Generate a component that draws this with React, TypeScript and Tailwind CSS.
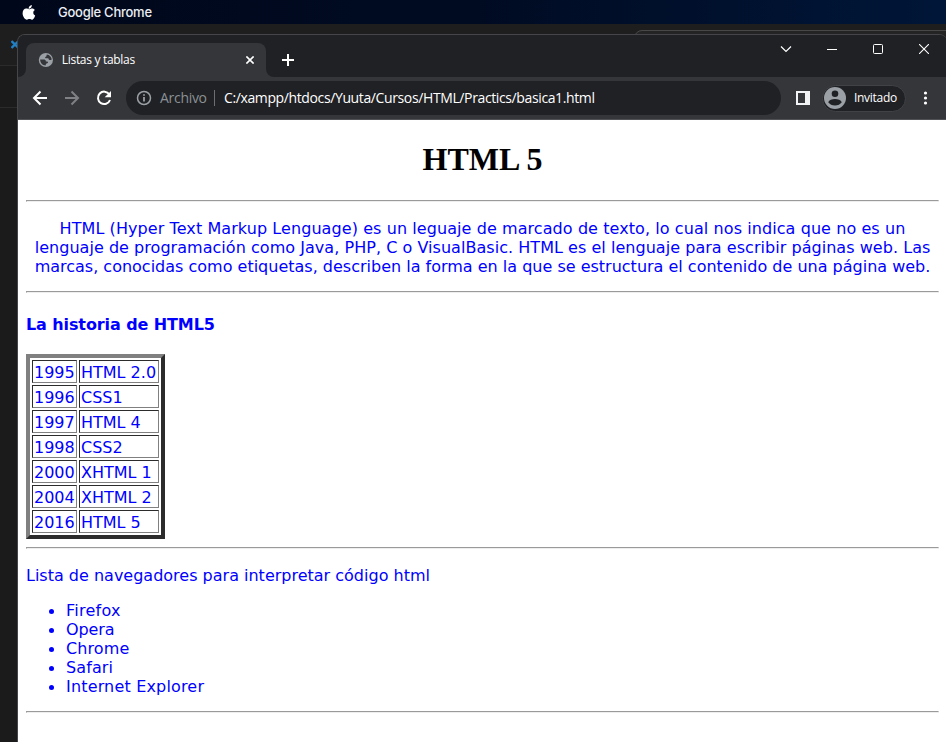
import React from "react";

const history: [string, string][] = [
  ["1995", "HTML 2.0"],
  ["1996", "CSS1"],
  ["1997", "HTML 4"],
  ["1998", "CSS2"],
  ["2000", "XHTML 1"],
  ["2004", "XHTML 2"],
  ["2016", "HTML 5"],
];

const browsers = [
  { name: "Firefox", tracking: "tracking-[0.25px]" },
  { name: "Opera", tracking: "tracking-[-0.1px]" },
  { name: "Chrome", tracking: "tracking-[0.1px]" },
  { name: "Safari", tracking: "tracking-[0.1px]" },
  { name: "Internet Explorer", tracking: "tracking-[0.17px]" },
];

const ui = "font-['Open_Sans','Noto_Sans',sans-serif]";

function Rule() {
  return (
    <div className="h-[2px] w-full border border-[#9a9a9a] border-b-[#eeeeee] border-r-[#eeeeee]" />
  );
}

function MenuBar() {
  return (
    <div className="flex h-6 items-center bg-linear-to-r from-[#00071a] via-[#000b22] to-[#001638]">
      <svg className="ml-[22px] h-[15px] w-[14px]" viewBox="0 0 14 15" fill="#fff">
        <path d="M9.800 0C9.900 1.100 9.500 2.100 8.900 2.800c-.6.7-1.500 1.100-2.300 1.100-.1-1 .3-1.900.9-2.600C8.100.6 9 .1 9.800 0z" />
        <path d="M12.900 5.100c-1 .6-1.600 1.500-1.600 2.600 0 1.300.8 2.300 1.900 2.700-.4 1.400-1.700 4.300-3.300 4.300-.9 0-1.400-.6-2.500-.6s-1.600.6-2.500.6C2.700 14.700.6 11.300.6 8.300c0-2.900 1.700-4.700 3.600-4.700 1.200 0 2.100.7 2.800.7.700 0 1.700-.8 3.200-.8 1 0 2.100.6 2.700 1.600z" />
      </svg>
      <span className="ml-[22px] pt-px font-[Inter,sans-serif] text-[13px] leading-none font-medium tracking-[-0.25px] text-[#eceef2]">
        Google Chrome
      </span>
    </div>
  );
}

function TabStrip() {
  return (
    <div className="flex h-[42px] bg-[#202124]">
      <div className="flex h-full w-2 items-end bg-[#35363a]">
        <div className="h-full w-full rounded-br-lg bg-[#202124]" />
      </div>
      <div className="mt-2 flex h-[34px] w-[240px] items-center rounded-t-lg bg-[#35363a]">
        <svg className="ml-3 size-4" viewBox="0 0 16 16">
          <circle cx="8" cy="8" r="7.200" fill="#9aa0a6" />
          <path
            d="M9 2.300c2.700.4 4.800 2.600 4.900 5.200-.8.700-2 .8-2.700.2-.6-.6-.3-1.300-1-1.500H7.800c-.8-.2-.7-1.300.1-1.500.9-.2.5-1.600 1.100-2.400z"
            fill="#35363a"
          />
          <path
            d="M2.200 7.600h3.500c1.500 0 2.300.6 2.300 1.900h1.300c.9.100 1.100 1 .6 1.500-.7.700-1.700.4-1.900 1.400l-.3 1.300C4.600 13.600 2.100 11 2.200 7.600z"
            fill="#35363a"
          />
        </svg>
        <span className={`${ui} ml-2 w-[187px] text-[12px] leading-4 tracking-[-0.3px] whitespace-nowrap text-white`}>
          Listas y tablas
        </span>
        <svg className="mr-3 size-2 shrink-0" viewBox="0 0 8 8" stroke="#fff" strokeWidth="1.600">
          <path d="M.4.4l7.200 7.200M7.600.4L.4 7.600" />
        </svg>
      </div>
      <div className="flex h-full w-2 bg-[#35363a]">
        <div className="h-full w-full rounded-bl-lg bg-[#202124]" />
      </div>
      <svg className="mt-[19px] ml-2 size-3" viewBox="0 0 12 12" stroke="#fff" strokeWidth="2">
        <path d="M6 0v12M0 6h12" />
      </svg>
      <div className="mt-[9px] ml-auto flex h-[10px] items-center gap-9 pr-[18px]">
        <svg className="size-[10px] overflow-visible" viewBox="0 0 10 10" fill="none" stroke="#fff" strokeWidth="1.200">
          <path d="M0 2.500l5 5 5-5" />
        </svg>
        <svg className="size-[10px]" viewBox="0 0 10 10" stroke="#fff">
          <path d="M0 5.500h10" />
        </svg>
        <svg className="size-[10px]" viewBox="0 0 10 10" fill="none" stroke="#fff">
          <rect x=".5" y=".5" width="9" height="9" rx="1" />
        </svg>
        <svg className="size-[10px]" viewBox="0 0 10 10" stroke="#fff" strokeWidth="1.100">
          <path d="M0 0l10 10M10 0L0 10" />
        </svg>
      </div>
    </div>
  );
}

function Toolbar() {
  return (
    <div className="flex h-[43px] items-center border-b border-[#505155] bg-[#35363a]">
      <svg className="ml-[14px] size-4" viewBox="0 0 16 16" fill="none" stroke="#fff" strokeWidth="2">
        <path d="M15 8H2M8.500 1.500L2 8l6.500 6.500" />
      </svg>
      <svg className="ml-4 size-4" viewBox="0 0 16 16" fill="none" stroke="#7f8184" strokeWidth="2">
        <path d="M1 8h13M7.500 1.500L14 8l-6.500 6.500" />
      </svg>
      <svg className="ml-4 size-4" viewBox="0 0 16 16">
        <path d="M13.300 4.300A6.200 6.200 0 1 0 14 10" fill="none" stroke="#fff" strokeWidth="2" />
        <path d="M15 .9v6.300H8.700z" fill="#fff" />
      </svg>
      <div className={`${ui} ml-[14px] flex h-[34px] w-[655px] items-center rounded-full bg-[#202124] whitespace-nowrap`}>
        <svg className="ml-[10px] size-4" viewBox="0 0 16 16" fill="none" stroke="#9aa0a6">
          <circle cx="8" cy="8" r="6.500" strokeWidth="1.500" />
          <path d="M8 7v4.500M8 4.300v1.500" strokeWidth="1.800" />
        </svg>
        <span className="ml-2 w-[54px] text-[14px] leading-5 tracking-[-0.3px] text-[#8b9094]">Archivo</span>
        <div className="h-4 w-px bg-[#6b6e72]" />
        <span className="ml-[9px] text-[14px] leading-5 tracking-[-0.38px] text-white">
          C:/xampp/htdocs/Yuuta/Cursos/HTML/Practics/basica1.html
        </span>
      </div>
      <svg className="ml-[15px] h-[14px] w-[14px]" viewBox="0 0 14 14">
        <path d="M0 0h14v14H0zM2 2v10h7V2z" fill="#f1f3f4" fillRule="evenodd" />
      </svg>
      <div className="ml-3 flex h-[27px] w-[84px] items-center rounded-full border border-[#414246] bg-[#202124]">
        <svg className="ml-px size-[22px] shrink-0" viewBox="0 0 22 22">
          <circle cx="11" cy="11" r="11" fill="#9aa0a6" />
          <circle cx="11" cy="6.800" r="3.300" fill="#202124" />
          <path d="M4.200 15.300c.8-2.300 4-3.200 6.800-3.200s6 .9 6.800 3.200c-1.400 2-4 3.300-6.800 3.300s-5.400-1.300-6.800-3.300z" fill="#202124" />
        </svg>
        <span className={`${ui} ml-2 text-[12px] leading-4 tracking-[-0.3px] text-white`}>Invitado</span>
      </div>
      <svg className="ml-4 h-[14px] w-[6px]" viewBox="0 0 6 14" fill="#fff">
        <circle cx="3.500" cy="2" r="1.600" />
        <circle cx="3.500" cy="7" r="1.600" />
        <circle cx="3.500" cy="12" r="1.600" />
      </svg>
    </div>
  );
}

function Page() {
  return (
    <div className="h-[622px] w-[929px] bg-white px-2 font-['DejaVu_Sans',sans-serif] text-[16px] leading-[19px] text-[#0000ff]">
      <h1 className="h-[80px] pt-[21px] text-center font-['Liberation_Serif',serif] text-[32px] leading-[37px] font-bold text-black">
        HTML 5
      </h1>
      <Rule />
      <div className="flex h-[89px] flex-col items-center pt-[17px] whitespace-nowrap">
        <span className="tracking-[0.08px]">
          HTML (Hyper Text Markup Lenguage) es un leguaje de marcado de texto, lo cual nos indica que no es un
        </span>
        <span className="tracking-[0.04px]">
          lenguaje de programación como Java, PHP, C o VisualBasic. HTML es el lenguaje para escribir páginas web. Las
        </span>
        <span>
          marcas, conocidas como etiquetas, describen la forma en la que se estructura el contenido de una página web.
        </span>
      </div>
      <Rule />
      <h4 className="h-[61px] pt-[22px] font-bold tracking-[-0.1px]">La historia de HTML5</h4>
      <table className="w-[139px] table-fixed border-separate border-spacing-[2px] border-4 border-t-[#808080] border-r-[#2c2c2c] border-b-[#2c2c2c] border-l-[#808080]">
        <tbody>
          {history.map(([year, name]) => (
            <tr key={year} className="h-[23px]">
              <td className="w-[45px] border border-t-[#2c2c2c] border-r-[#808080] border-b-[#808080] border-l-[#2c2c2c] px-px pt-[2px]">
                {year}
              </td>
              <td className="border border-t-[#2c2c2c] border-r-[#808080] border-b-[#808080] border-l-[#2c2c2c] px-px pt-[2px] whitespace-nowrap">
                {name}
              </td>
            </tr>
          ))}
        </tbody>
      </table>
      <div className="h-2" />
      <Rule />
      <p className="h-[52px] pt-[17px]">Lista de navegadores para interpretar código html</p>
      <ul className="h-[110px] pl-10">
        {browsers.map((b) => (
          <li key={b.name} className="relative h-[19px]">
            <span className="absolute top-[8px] left-[-17px] size-[5px] rounded-full bg-[#0000ff]" />
            <span className={b.tracking}>{b.name}</span>
          </li>
        ))}
      </ul>
      <Rule />
    </div>
  );
}

export default function App() {
  return (
    <div className="relative h-[742px] w-[946px] overflow-hidden bg-[#1b1b1b]">
      <MenuBar />
      <div className="h-[42px] border-b border-[#2b2b2b] bg-[#1e1e1e]" />
      <div className="h-[42px] border-b border-[#2b2b2b]" />
      <svg className="absolute top-[40px] left-[11px] h-[9px] w-[9px]" viewBox="0 0 9 9" fill="none" stroke="#1e81c7" strokeWidth="2.400">
        <path d="M.5 1L7 7.500M.5 8L7 1.500" />
      </svg>
      <div className="absolute top-[30px] left-[634px] h-5 w-[330px] rounded-tl-lg border border-[#484848] bg-[#242424]" />
      <div className="absolute top-[34px] left-[17px] w-[930px] overflow-hidden rounded-t-lg border-t border-l border-[#46464a] bg-[#202124]">
        <div className="w-[929px]">
          <TabStrip />
          <Toolbar />
          <Page />
        </div>
      </div>
    </div>
  );
}
